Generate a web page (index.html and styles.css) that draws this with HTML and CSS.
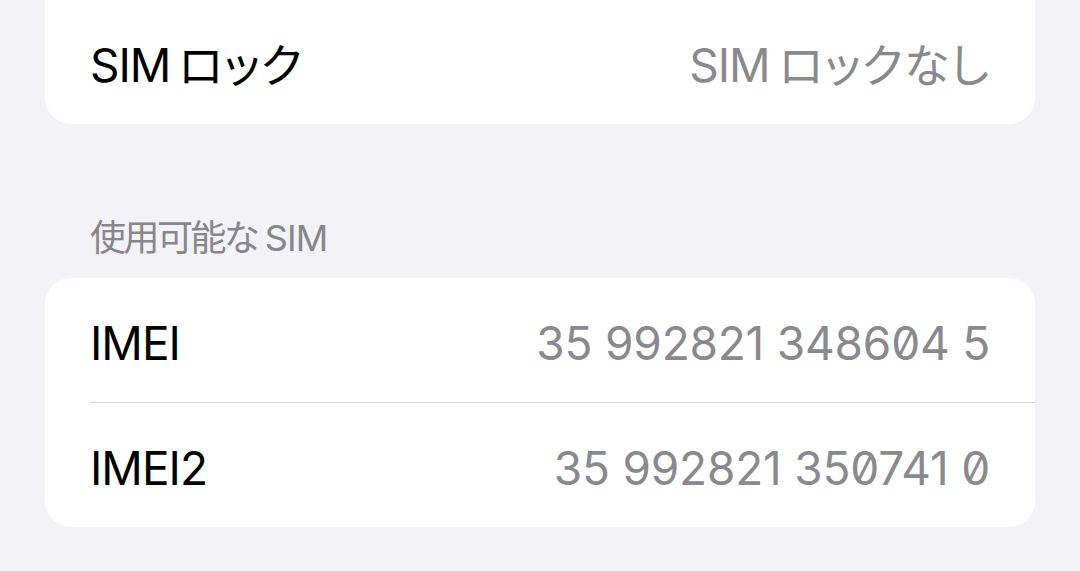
FILE: index.html
```html
<!DOCTYPE html>
<html lang="ja">
<head>
  <meta charset="UTF-8">
  <title>情報</title>
  <link rel="stylesheet" href="styles.css">
</head>
<body>

  <div class="page">
    <div class="group group-top">
      <div class="row">
        <span class="label"><span class="latin">SIM</span><span class="kana">ロック</span></span>
        <span class="value"><span class="latin">SIM</span><span class="kana">ロックなし</span></span>
      </div>
    </div>

    <h2 class="header"><span class="kana">使用可能な</span><span class="latin">SIM</span></h2>

    <div class="group">
      <div class="row">
        <span class="label latin">IMEI</span>
        <span class="value digits">35 992821 348604 5</span>
      </div>
      <div class="row">
        <span class="label latin">IMEI2</span>
        <span class="value digits">35 992821 350741 0</span>
      </div>
    </div>
  </div>

</body>
</html>
```

FILE: styles.css
```css
body { margin: 0; background: #f2f2f7; font-family: Inter, "Noto Sans CJK JP", sans-serif; color: #000; overflow: hidden; }
.page { padding: 0 45px; }
.group { background: #fff; border-radius: 26px; overflow: hidden; }
.group-top { margin-top: -40px; padding-top: 40px; border-radius: 0 0 26px 26px; }
.row { display: flex; justify-content: space-between; align-items: center; margin-left: 45px; padding: 37px 45px 31px 0; line-height: 56px; font-size: 46px; }
.row + .row { border-top: 1px solid #d8d8dc; }
.latin { letter-spacing: -1px; }
.kana { font-feature-settings: "palt" 1; letter-spacing: 0.5px; margin-left: 8px; }
.value .kana { letter-spacing: 1px; margin-left: 9px; }
.value { color: #8a8a8e; }
.digits { font-feature-settings: "zero" 1; letter-spacing: -0.2px; }
.header { margin: 92px 0 18px 45px; font-size: 36px; line-height: 44px; font-weight: normal; color: #86868b; }
.header .kana { margin: 0 8px 0 0; letter-spacing: -2.5px; }
```
